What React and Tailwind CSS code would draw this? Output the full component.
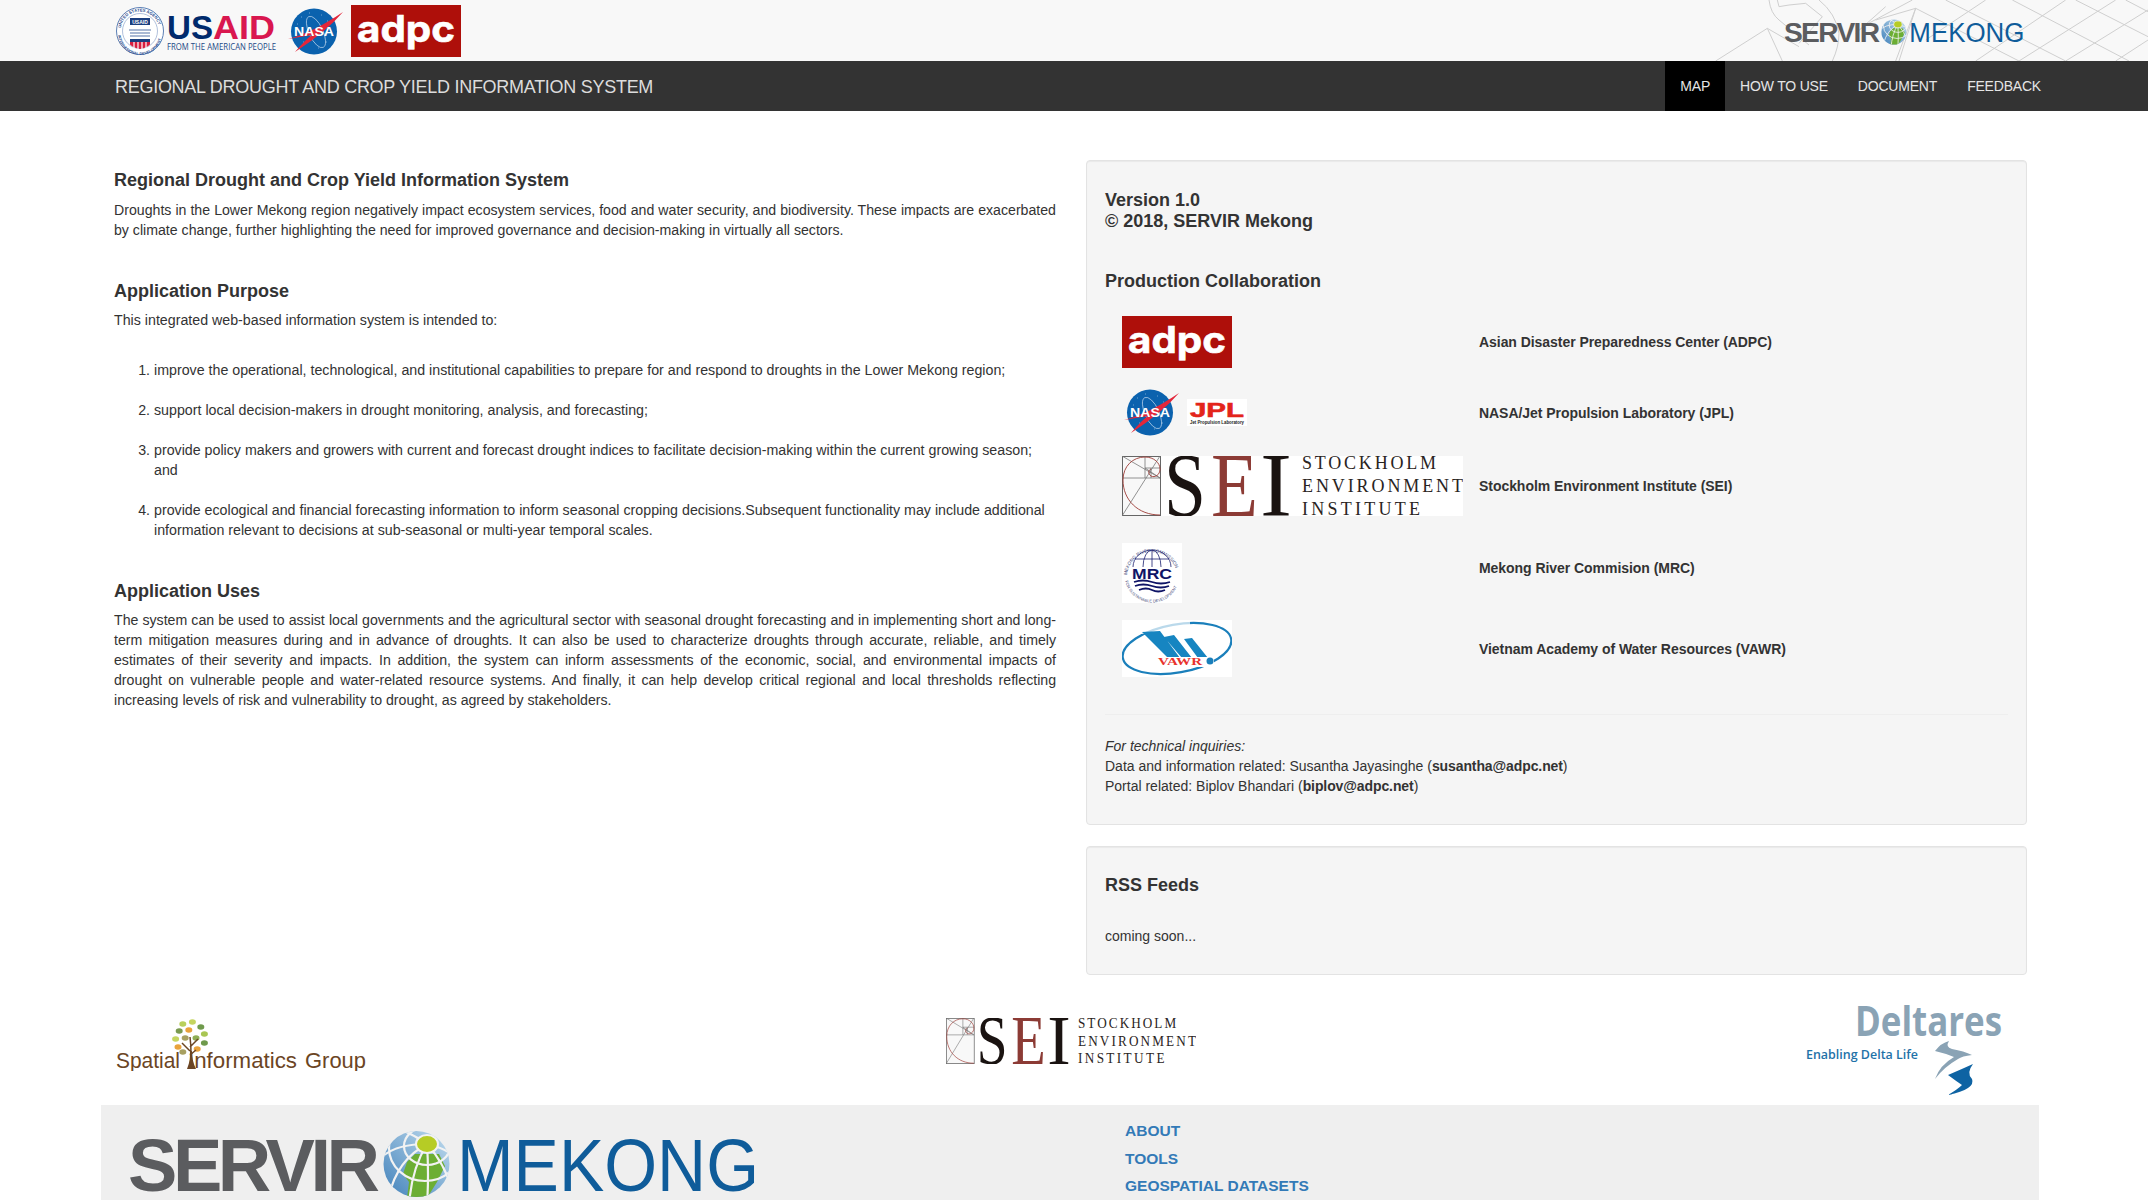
const partners = [
  { name: 'Asian Disaster Preparedness Center (ADPC)', logo: 'adpc', row: 'h-[52px] mt-[25px]' },
  { name: 'NASA/Jet Propulsion Laboratory (JPL)', logo: 'nasa', row: 'h-[47px] mt-[21px]' },
  { name: 'Stockholm Environment Institute (SEI)', logo: 'sei', row: 'h-[60px] mt-[20px]' },
  { name: 'Mekong River Commision (MRC)', logo: 'mrc', row: 'h-[60px] mt-[27px]', text: 'pb-[10px]' },
  { name: 'Vietnam Academy of Water Resources (VAWR)', logo: 'vawr', row: 'h-[57px] mt-[17px]' }
]

const navItems = ['MAP', 'HOW TO USE', 'DOCUMENT', 'FEEDBACK']

const uses = [
  'improve the operational, technological, and institutional capabilities to prepare for and respond to droughts in the Lower Mekong region;',
  'support local decision-makers in drought monitoring, analysis, and forecasting;',
  'provide policy makers and growers with current and forecast drought indices to facilitate decision-making within the current growing season; and',
  'provide ecological and financial forecasting information to inform seasonal cropping decisions.Subsequent functionality may include additional information relevant to decisions at sub-seasonal or multi-year temporal scales.'
]

function UsaidLogo() {
  return (
    <svg width="163" height="50" viewBox="0 0 163 50" className="shrink-0">
      <defs>
        <path id="sealtop" d="M5.5 25a19.5 19.5 0 0 1 39 0" />
        <path id="sealbot" d="M3 27a22 22 0 0 0 44 0" />
      </defs>
      <circle cx="25" cy="25" r="23.5" fill="#fff" stroke="#5b7fb5" strokeWidth="1" />
      <circle cx="25" cy="25" r="17.5" fill="#fff" stroke="#7b96c2" strokeWidth="0.6" />
      <text fontSize="4.2" fontWeight="700" fill="#2a4d8f" fontFamily="Liberation Sans"><textPath href="#sealtop" startOffset="3">UNITED STATES AGENCY</textPath></text>
      <text fontSize="3.8" fontWeight="700" fill="#2a4d8f" fontFamily="Liberation Sans"><textPath href="#sealbot" startOffset="2">INTERNATIONAL DEVELOPMENT</textPath></text>
      <rect x="15" y="12" width="20" height="7" fill="#1b3f80" />
      <text x="25" y="17.6" textAnchor="middle" fontSize="5" fontWeight="700" fill="#fff" fontFamily="Liberation Sans">USAID</text>
      <path d="M14 24h22M15 27h20M15 30h20" stroke="#8ea3c6" strokeWidth="1.4" />
      <rect x="15" y="33" width="20" height="3" fill="#1b3f80" />
      <path d="M15 36h20v2.5q-3 3-10 4.5q-7-1.500-10-4.500z" fill="#d81e3f" />
      <path d="M19 36v6M23 36v7M27 36v7M31 36v6" stroke="#fff" strokeWidth="1.200" />
      <text x="52" y="33" fontSize="33.500" fontWeight="700" fill="#002a6c" fontFamily="Liberation Sans" textLength="46" lengthAdjust="spacingAndGlyphs">US</text>
      <text x="98" y="33" fontSize="33.500" fontWeight="700" fill="#d9174f" fontFamily="Liberation Sans" textLength="62" lengthAdjust="spacingAndGlyphs">AID</text>
      <text x="52" y="44" fontSize="9.500" fill="#1d4a87" fontFamily="Open Sans" textLength="109" lengthAdjust="spacingAndGlyphs">FROM THE AMERICAN PEOPLE</text>
    </svg>
  )
}

function NasaLogo() {
  return (
    <svg width="56" height="47" viewBox="0 0 56 47" className="shrink-0">
      <circle cx="26" cy="23.500" r="23" fill="#0b62ae" />
      <path d="M13 9h.5M21 5h.5M33 7h.5M39 13h.5M9 16h.5M15 34h.5M30 40h.500M38 34h.5" stroke="#cfe2f3" strokeWidth="1" />
      <ellipse cx="28" cy="24" rx="7" ry="17" fill="none" stroke="#b8d2ea" strokeWidth="0.7" transform="rotate(-25 28 24)" />
      <path d="M0 31Q24 25 55 4Q38 24 7 44Q18 31 24 27Q12 29 0 31z" fill="#e3263a" />
      <text x="26" y="28" textAnchor="middle" fontSize="13" fontWeight="700" fill="#fff" fontFamily="Liberation Sans" textLength="40" lengthAdjust="spacingAndGlyphs">NASA</text>
    </svg>
  )
}

function AdpcLogo() {
  return (
    <svg width="110" height="52" viewBox="0 0 110 52" className="shrink-0">
      <rect width="110" height="52" fill="#ae0f0a" />
      <text x="6" y="37" fontSize="37" fontWeight="700" fill="#fff" stroke="#fff" strokeWidth="0.6" fontFamily="Inter" textLength="98" lengthAdjust="spacingAndGlyphs">adpc</text>
    </svg>
  )
}

function JplLogo() {
  return (
    <svg width="60" height="27" viewBox="0 0 60 27" className="shrink-0">
      <rect width="60" height="27" fill="#fff" />
      <text x="30" y="18" textAnchor="middle" fontSize="21" fontWeight="700" fill="#e3241b" stroke="#e3241b" strokeWidth="0.6" fontFamily="Liberation Sans" textLength="54" lengthAdjust="spacingAndGlyphs">JPL</text>
      <text x="30" y="24.500" textAnchor="middle" fontSize="4.500" fontWeight="700" fill="#222" fontFamily="Liberation Sans" textLength="54" lengthAdjust="spacingAndGlyphs">Jet Propulsion Laboratory</text>
    </svg>
  )
}

function SeiLogo({ width, height, bg }) {
  return (
    <svg width={width} height={height} viewBox="0 0 341 60" preserveAspectRatio="none" className="shrink-0">
      {bg && <rect x="38" width="303" height="60" fill="#fff" />}
      <rect x="0.500" y="0.500" width="38" height="59" fill="#f8f8f8" stroke="#666" strokeWidth="1" />
      <path d="M0 22H38M23 0V22M23 12H38M29 12V22M0 0L38 22M38 0L0 60M23 12L38 22" fill="none" stroke="#777" strokeWidth="0.8" />
      <path d="M38 59C16 59 1 44 1 24C1 10 11 1 23 1C32 1 38 7 38 13C38 19 33 22 29 20C26 18 26 14 29 13" fill="none" stroke="#9c3b35" strokeWidth="0.9" />
      <text x="42" y="59.500" fontSize="90" fill="#1a1311" fontFamily="Liberation Serif" textLength="42" lengthAdjust="spacingAndGlyphs">S</text>
      <text x="89" y="59.500" fontSize="90" fill="#8c3b35" fontFamily="Liberation Serif" textLength="47" lengthAdjust="spacingAndGlyphs">E</text>
      <text x="138" y="59.500" fontSize="90" fill="#1a1311" fontFamily="Liberation Serif" textLength="32" lengthAdjust="spacingAndGlyphs">I</text>
      <text x="180" y="13" fontSize="18" fill="#2a2422" fontFamily="Liberation Serif" textLength="134">STOCKHOLM</text>
      <text x="180" y="36" fontSize="18" fill="#2a2422" fontFamily="Liberation Serif" textLength="161">ENVIRONMENT</text>
      <text x="180" y="59" fontSize="18" fill="#2a2422" fontFamily="Liberation Serif" textLength="118">INSTITUTE</text>
    </svg>
  )
}

function MrcLogo() {
  return (
    <svg width="60" height="60" viewBox="0 0 60 60" className="shrink-0">
      <rect width="60" height="60" fill="#fff" />
      <defs>
        <path id="mrctop" d="M5 34a25 25 0 0 1 50 0" />
        <path id="mrcbot" d="M2.500 32a27.500 27.500 0 0 0 55 0" />
      </defs>
      <text fontSize="4.600" fill="#4b4f80" fontFamily="Liberation Sans"><textPath href="#mrctop" startOffset="2">MEKONG RIVER COMMISSION</textPath></text>
      <text fontSize="4" fill="#4b4f80" fontFamily="Liberation Sans"><textPath href="#mrcbot" startOffset="6">FOR SUSTAINABLE DEVELOPMENT</textPath></text>
      <path d="M11 24a19 17 0 0 1 38 0M21 24a9 17 0 0 1 18 0M30 7V24M13 16H47" fill="none" stroke="#1a1f6e" strokeWidth="0.800" />
      <text x="30" y="36" textAnchor="middle" fontSize="15" fontWeight="700" fill="#0f1466" fontFamily="Liberation Sans" textLength="40" lengthAdjust="spacingAndGlyphs">MRC</text>
      <path d="M12 39q9-3 18 0t18 0M13 43q8-3 17 0t17 0M17 47q7-3 13 0t13 0" fill="none" stroke="#0f1466" strokeWidth="1.800" />
    </svg>
  )
}

function VawrLogo() {
  return (
    <svg width="110" height="57" viewBox="0 0 110 57" className="shrink-0">
      <rect width="110" height="57" fill="#fff" />
      <ellipse cx="55" cy="28.500" rx="55" ry="24" fill="none" stroke="#1a7fbb" strokeWidth="2.200" transform="rotate(-10 55 28.500)" />
      <rect x="18" y="0" width="50" height="14" fill="#fff" opacity="0.700" />
      <path d="M20 12L38 11L58 38H46zM42 17L52 15L70 38H60zM62 19L70 18L86 38H76z" fill="#1685c1" />
      <rect x="34" y="37" width="58" height="10" fill="#fff" />
      <text x="36" y="45" fontSize="10" fontWeight="700" fill="#e8322d" fontFamily="Liberation Serif" textLength="44" lengthAdjust="spacingAndGlyphs">VAWR</text>
      <circle cx="88" cy="41" r="3.500" fill="#1a7fbb" />
    </svg>
  )
}

function Globe() {
  const spokes = ['M44 14Q10 14 -4 30', 'M44 14Q14 30 6 66', 'M44 14Q28 40 26 76', 'M44 14Q46 44 44 76', 'M44 14Q62 34 68 58', 'M44 14Q62 18 74 28', 'M44 14Q50 4 66 -6', 'M44 14Q30 4 14 -2']
  return (
    <svg x="255" width="67" height="68" viewBox="0 0 67 68">
      <defs>
        <clipPath id="globeclip"><circle cx="33.500" cy="34" r="33" /></clipPath>
        <linearGradient id="globefill" x1="1" y1="0" x2="0" y2="1">
          <stop offset="0" stopColor="#c4deef" />
          <stop offset="1" stopColor="#3f80ba" />
        </linearGradient>
      </defs>
      <g clipPath="url(#globeclip)">
        <rect width="67" height="68" fill="url(#globefill)" />
        <path d="M24 32L32 24H56L62 36L54 52L44 68H24L26 52L20 44z" fill="#6cae33" />
        <ellipse cx="44" cy="14" rx="11" ry="9" fill="#b6cc25" />
        {spokes.map(d => <path key={d} d={d} fill="none" stroke="#f2f2f2" strokeWidth="2.200" />)}
        <ellipse cx="44" cy="14" rx="11" ry="9" fill="#b6cc25" stroke="#f2f2f2" strokeWidth="2" />
        <ellipse cx="44" cy="16" rx="23" ry="19" fill="none" stroke="#f2f2f2" strokeWidth="2.200" />
        <ellipse cx="42" cy="18" rx="36" ry="33" fill="none" stroke="#f2f2f2" strokeWidth="2.200" />
      </g>
    </svg>
  )
}

function ServirLogo({ width, height }) {
  return (
    <svg width={width} height={height} viewBox="0 0 630 68" className="shrink-0">
      <text x="0" y="61" fontSize="74" fontWeight="700" fill="#5b5c5f" fontFamily="Liberation Sans" textLength="252">SERVIR</text>
      <Globe />
      <text x="329" y="61" fontSize="74" fill="#0f5c9a" fontFamily="Liberation Sans" textLength="302" lengthAdjust="spacingAndGlyphs">MEKONG</text>
    </svg>
  )
}

function HeaderLines() {
  return (
    <svg width="449" height="61" viewBox="0 0 1347 183" className="absolute right-0 top-0">
      <path
        d="M50 183L205 85L300 140M205 85L250 183M210 0Q215 40 240 60L330 135M235 0L240 20L270 15L320 10L370 50L300 130M360 0Q410 40 420 100Q420 140 400 183M490 80L640 0M470 100L560 20M530 60L650 25L600 183M590 183L650 25M650 25L960 183M740 0L1100 183M940 0L1290 183M1130 0L1347 110M1280 0L1347 35M830 183L1100 0M960 183L1250 0M1100 183L1347 30M1250 183L1347 120M680 120L860 0"
        fill="none"
        stroke="#cfcfcf"
        strokeWidth="3"
      />
    </svg>
  )
}

function SpatialLogo() {
  const leaves = [[34, 5, '#b9cf5a'], [42, 3, '#c5d560'], [49, 8, '#6f9a4c'], [31, 12, '#7a9a50'], [39, 11, '#e9a23b'], [52, 15, '#a9c653'], [28, 20, '#c5d560'], [36, 19, '#a8a060'], [45, 19, '#8fae55'], [52, 24, '#6f9a4c'], [30, 28, '#e9a23b'], [34, 33, '#a8a060'], [46, 30, '#e9a23b']]
  return (
    <svg width="250" height="52" viewBox="0 0 250 52" className="shrink-0">
      {leaves.map(([x, y, c]) => <ellipse key={`${x}-${y}`} cx={x * 1.2 + 26} cy={y} rx="3.500" ry="2.800" fill={c} />)}
      <path d="M74 48Q76 34 74 18M74 32L66 24M74 28L82 20M74 36L80 31" fill="none" stroke="#6b4524" strokeWidth="1.500" />
      <path d="M71 50Q75 40 74 32L76 32Q76 42 80 50z" fill="#6b4524" />
      <text x="0" y="49" fontSize="22" fill="#6b4524" fontFamily="Liberation Sans" textLength="64" lengthAdjust="spacingAndGlyphs">Spatial</text>
      <text x="72" y="49" fontSize="22" fill="#6b4524" fontFamily="Liberation Sans" textLength="109" lengthAdjust="spacingAndGlyphs">Informatics</text>
      <text x="189" y="49" fontSize="22" fill="#6b4524" fontFamily="Liberation Sans" textLength="61" lengthAdjust="spacingAndGlyphs">Group</text>
    </svg>
  )
}

function DeltaresLogo() {
  return (
    <svg width="197" height="92" viewBox="0 0 197 92" className="shrink-0">
      <text x="49" y="31" fontSize="41" fontWeight="700" fill="#8aa3b5" fontFamily="Open Sans" textLength="147" lengthAdjust="spacingAndGlyphs">Deltares</text>
      <text x="0" y="54" fontSize="13" fontWeight="600" fill="#1f72a8" fontFamily="Open Sans" textLength="112" lengthAdjust="spacingAndGlyphs">Enabling Delta Life</text>
      <path d="M129 46Q135 38 143 36Q139 42 146 44Q158 46 166 50Q156 51 152 54Q138 62 129 74Q134 60 148 52Q138 48 129 46z" fill="#8aa3b5" />
      <path d="M142 70Q156 64 167 59Q160 68 166 74Q170 84 142 90Q152 84 156 80Q150 76 142 70z" fill="#0e63a3" />
    </svg>
  )
}

export default function App() {
  return (
    <div className="h-[1200px] overflow-hidden bg-white border-r border-white font-['Liberation_Sans',sans-serif] text-sm text-[#333]">
      <header className="relative h-[61px] bg-[#f8f8f8] flex items-center pl-[115px]">
        <HeaderLines />
        <div className="relative flex items-center h-full">
          <div className="mt-[1px]"><UsaidLogo /></div>
          <div className="ml-[10px] mt-[2px]"><NasaLogo /></div>
          <div className="ml-[7px]"><AdpcLogo /></div>
        </div>
        <div className="relative ml-auto mr-[124px] mt-[2px]">
          <ServirLogo width={240} height={26} />
        </div>
      </header>

      <nav className="h-[50px] bg-[#333] flex items-center justify-between pl-[115px] pr-[92px]">
        <div className="text-[18px] leading-5 pt-[2px] tracking-[-0.28px] text-[#dcdcdc]">REGIONAL DROUGHT AND CROP YIELD INFORMATION SYSTEM</div>
        <div className="flex h-full">
          {navItems.map(item => (
            <a key={item} className={`h-full flex items-center px-[15px] tracking-[-0.2px] ${item === 'MAP' ? 'bg-black text-[#e5e5e5]' : 'text-[#e5e5e5]'}`}>{item}</a>
          ))}
        </div>
      </nav>

      <main className="flex pl-[114px] pt-[49px]">
        <div className="w-[942px] mt-[10px] text-[14.15px] leading-5">
          <h4 className="text-[18px] font-bold leading-5 mb-[10px]">Regional Drought and Crop Yield Information System</h4>
          <p className="text-justify">Droughts in the Lower Mekong region negatively impact ecosystem services, food and water security, and biodiversity. These impacts are exacerbated by climate change, further highlighting the need for improved governance and decision-making in virtually all sectors.</p>

          <h4 className="text-[18px] font-bold leading-5 mt-[41px] mb-[9px]">Application Purpose</h4>
          <p className="text-[14.22px]">This integrated web-based information system is intended to:</p>
          <ol className="list-decimal pl-10 mt-[30px] space-y-5 text-[14.22px]">
            {uses.map(u => <li key={u}>{u}</li>)}
          </ol>

          <h4 className="text-[18px] font-bold leading-5 mt-[41px] mb-[9px]">Application Uses</h4>
          <p className="text-justify [text-align-last:justify]">The system can be used to assist local governments and the agricultural sector with seasonal drought forecasting and in implementing short and long-term mitigation measures during and in advance of droughts. It can also be used to characterize droughts through accurate, reliable, and timely estimates of their severity and impacts. In addition, the system can inform assessments of the economic, social, and environmental impacts of</p>
          <p className="text-justify">drought on vulnerable people and water-related resource systems. And finally, it can help develop critical regional and local thresholds reflecting increasing levels of risk and vulnerability to drought, as agreed by stakeholders.</p>
        </div>

        <div className="w-[941px] ml-[30px]">
          <section className="h-[665px] bg-[#f5f5f5] border border-[#e3e3e3] rounded shadow-[inset_0_1px_1px_rgba(0,0,0,0.05)] px-[18px] pt-[29px] leading-5">
            <h4 className="text-[18px] font-bold leading-[21px]">Version 1.0<br />© 2018, SERVIR Mekong</h4>
            <h4 className="text-[18px] font-bold leading-5 mt-[39px]">Production Collaboration</h4>

            <div className="pl-[17px]">
              {partners.map(p => (
                <div key={p.name} className={`flex items-center ${p.row}`}>
                  <div className="w-[357px] flex items-center">
                    {p.logo === 'adpc' && <AdpcLogo />}
                    {p.logo === 'nasa' && (
                      <div className="flex items-center ml-[2px] gap-[7px]">
                        <NasaLogo />
                        <JplLogo />
                      </div>
                    )}
                    {p.logo === 'sei' && <SeiLogo width={341} height={60} bg />}
                    {p.logo === 'mrc' && <MrcLogo />}
                    {p.logo === 'vawr' && <VawrLogo />}
                  </div>
                  <div className={`font-bold tracking-[-0.05px] ${p.text || ''}`}>{p.name}</div>
                </div>
              ))}
            </div>

            <hr className="border-[#eee] mt-[37px]" />
            <div className="mt-[21px]">
              <em>For technical inquiries:</em><br />
              Data and information related: Susantha Jayasinghe (<b className="tracking-[-0.1px]">susantha@adpc.net</b>)<br />
              Portal related: Biplov Bhandari (<b className="tracking-[-0.1px]">biplov@adpc.net</b>)
            </div>
          </section>

          <section className="h-[129px] mt-[21px] bg-[#f5f5f5] border border-[#e3e3e3] rounded shadow-[inset_0_1px_1px_rgba(0,0,0,0.05)] px-[18px] pt-[28px]">
            <h4 className="text-[18px] font-bold leading-5">RSS Feeds</h4>
            <p className="mt-[31px] leading-5">coming soon...</p>
          </section>
        </div>
      </main>

      <div className="flex items-start h-[100px] mt-[30px] pl-[116px]">
        <div className="mt-[14px]"><SpatialLogo /></div>
        <div className="ml-[580px] mt-[13px]"><SeiLogo width={250} height={46} /></div>
        <div className="ml-[610px]"><DeltaresLogo /></div>
      </div>

      <footer className="ml-[101px] w-[1938px] h-[95px] bg-[#efefef] flex pl-[26px] pt-[25px]">
        <ServirLogo width={632} height={68} />
        <div className="ml-[366px] -mt-[9px] flex flex-col gap-[7.5px] text-[#337ab7] font-bold text-[15.5px] leading-5">
          <a>ABOUT</a>
          <a>TOOLS</a>
          <a>GEOSPATIAL DATASETS</a>
        </div>
      </footer>
    </div>
  )
}
